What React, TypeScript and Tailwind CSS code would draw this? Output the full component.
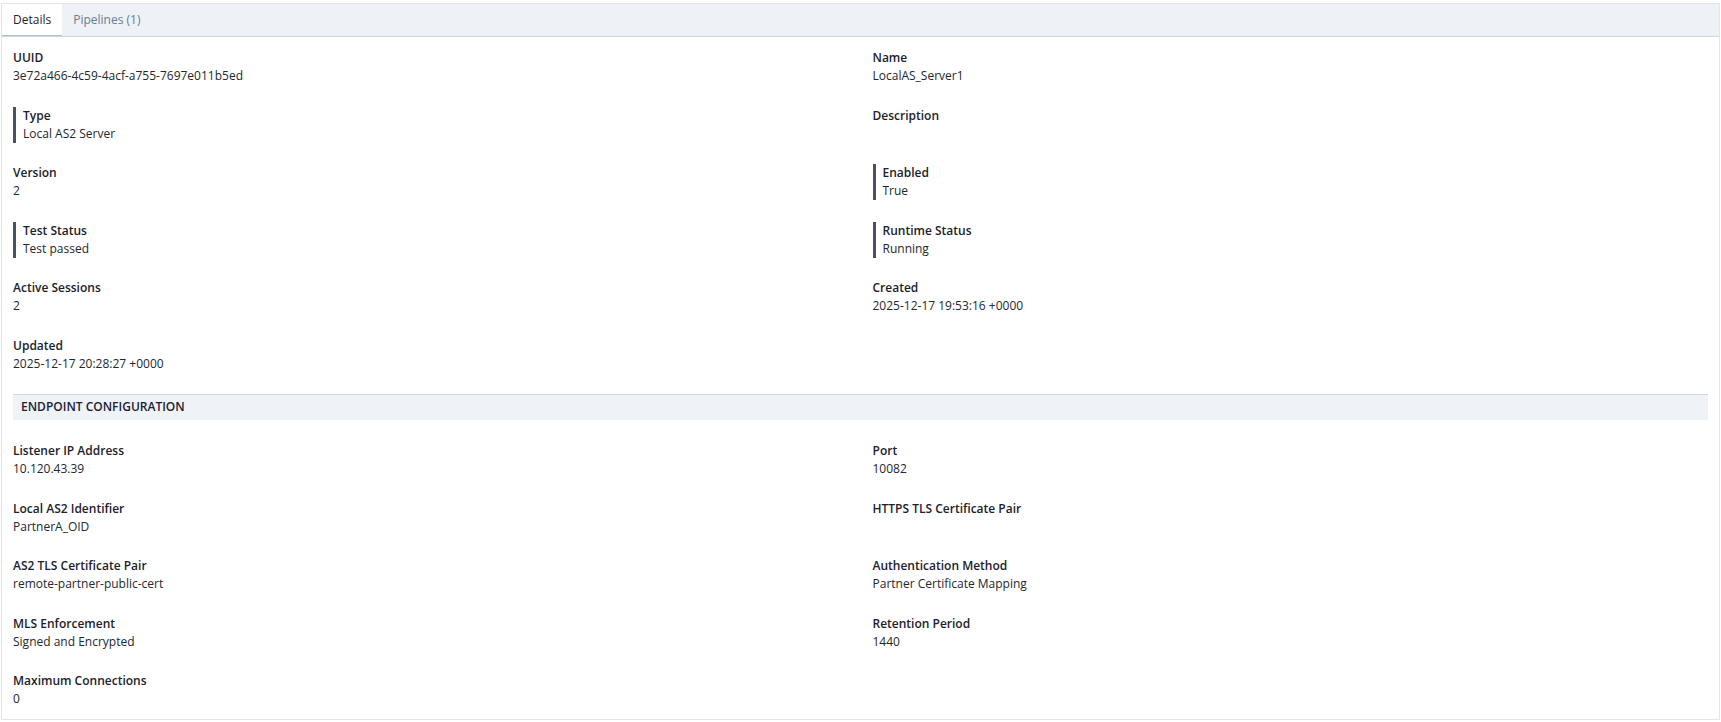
import React from "react";

type F = { label: string; value?: string; bar?: boolean };

const general: F[] = [
  { label: "UUID", value: "3e72a466-4c59-4acf-a755-7697e011b5ed" },
  { label: "Name", value: "LocalAS_Server1" },
  { label: "Type", value: "Local AS2 Server", bar: true },
  { label: "Description", value: "" },
  { label: "Version", value: "2" },
  { label: "Enabled", value: "True", bar: true },
  { label: "Test Status", value: "Test passed", bar: true },
  { label: "Runtime Status", value: "Running", bar: true },
  { label: "Active Sessions", value: "2" },
  { label: "Created", value: "2025-12-17 19:53:16 +0000" },
  { label: "Updated", value: "2025-12-17 20:28:27 +0000" },
];

const endpoint: F[] = [
  { label: "Listener IP Address", value: "10.120.43.39" },
  { label: "Port", value: "10082" },
  { label: "Local AS2 Identifier", value: "PartnerA_OID" },
  { label: "HTTPS TLS Certificate Pair", value: "" },
  { label: "AS2 TLS Certificate Pair", value: "remote-partner-public-cert" },
  { label: "Authentication Method", value: "Partner Certificate Mapping" },
  { label: "MLS Enforcement", value: "Signed and Encrypted" },
  { label: "Retention Period", value: "1440" },
  { label: "Maximum Connections", value: "0" },
];

function Field({ f }: { f: F }) {
  return (
    <div className={f.bar ? "border-l-[3px] border-[#4a5162] pl-[7px]" : ""}>
      <div className="text-[12px] leading-[18px] font-semibold text-[#1c212b]">{f.label}</div>
      <div className="text-[12px] leading-[18px] min-h-[18px] text-[#23272e]">{f.value}</div>
    </div>
  );
}

function Grid({ items }: { items: F[] }) {
  return (
    <div className="grid grid-cols-2 gap-x-6 gap-y-[21.6px]">
      {items.map((f) => (
        <Field key={f.label} f={f} />
      ))}
    </div>
  );
}

export default function App() {
  return (
    <div className="w-full h-[722px] bg-white pt-[3px] px-[1px] font-['Open_Sans',sans-serif]">
      <div className="h-[717px] border border-[#e1e6ec] bg-white">
        <div className="flex h-[33px] bg-[#eef2f7] border-b border-[#d3d8de]">
          <div className="h-[32px] px-[11px] bg-white border-b border-[#a6c2de] flex items-center text-[12px] text-[#1f2430]">
            Details
          </div>
          <div className="h-[32px] px-[11px] flex items-center text-[12px] text-[#6b7b90]">
            Pipelines (1)
          </div>
        </div>
        <div className="px-[11px] pt-[12px] pb-[11px]">
          <Grid items={general} />
          <div className="mt-[21px] mb-[22px] h-[26px] border-t border-[#cdd8e3] bg-[#eff3f8] flex items-center pl-[8px] text-[12px] font-semibold text-[#1b2130]">
            ENDPOINT CONFIGURATION
          </div>
          <Grid items={endpoint} />
        </div>
      </div>
    </div>
  );
}
